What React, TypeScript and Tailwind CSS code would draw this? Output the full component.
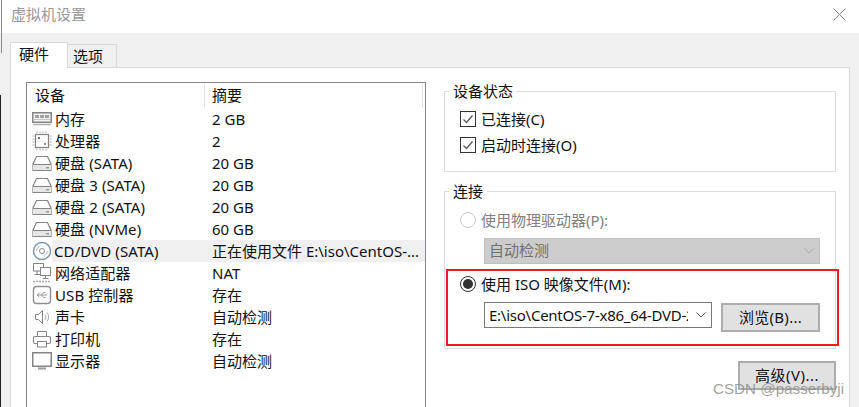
import React from "react";

const g = "#858585";

function Ram() {
  return (
    <svg width="20" height="20" viewBox="0 0 20 20" fill="none">
      <rect x="0.75" y="3.75" width="18.5" height="9.5" fill="#f2f2f2" stroke={g} strokeWidth="1.5" />
      <rect x="3" y="6" width="4" height="3" fill="#a0a0a0" />
      <rect x="8" y="6" width="4" height="3" fill="#a0a0a0" />
      <rect x="13" y="6" width="4" height="3" fill="#a0a0a0" />
      <path d="M1 10.5h18" stroke="#c4c4c4" />
      <path d="M1 15.5h18" stroke="#b0b0b0" strokeWidth="1.5" />
    </svg>
  );
}
function Cpu() {
  return (
    <svg width="20" height="20" viewBox="0 0 20 20" fill="none">
      <rect x="3.5" y="3.5" width="13" height="13" stroke={g} strokeWidth="1.2" />
      <rect x="6" y="6" width="2" height="2" fill="#707070" />
      <rect x="12" y="12" width="2" height="2" fill="#8c8c8c" />
      <path d="M5 0.5v2M8 0.5v2M11 0.5v2M14 0.5v2M5 17.5v2M8 17.5v2M11 17.5v2M14 17.5v2M0.5 5h2M0.5 8h2M0.5 11h2M0.5 14h2M17.5 5h2M17.5 8h2M17.5 11h2M17.5 14h2" stroke="#a8a8a8" />
    </svg>
  );
}
function Disk() {
  return (
    <svg width="20" height="20" viewBox="0 0 20 20" fill="none">
      <path d="M4.5 3.5h11L19 11v6.5H1V11z" stroke={g} strokeWidth="1.2" fill="#fff" />
      <rect x="1" y="12" width="18" height="5.5" fill="#e6e6e6" />
      <rect x="14" y="14" width="3" height="1.5" fill="#999" />
      <path d="M1 11.5h18M1 17.5h18" stroke={g} strokeWidth="1.2" />
    </svg>
  );
}
function Cd() {
  return (
    <svg width="20" height="20" viewBox="0 0 20 20" fill="none">
      <circle cx="10" cy="10" r="8.5" stroke="#7d97ad" strokeWidth="1.5" />
      <circle cx="10" cy="10" r="2.5" stroke="#8c8c8c" />
      <path d="M4.5 10a5.5 5.5 0 0 1 3-4.8M15.5 10a5.5 5.5 0 0 1-3 4.8" stroke="#a9bac8" />
    </svg>
  );
}
function Net() {
  return (
    <svg width="20" height="20" viewBox="0 0 20 20" fill="none">
      <rect x="1.5" y="0.5" width="10" height="7.5" stroke={g} />
      <rect x="8.5" y="4.5" width="10" height="8" fill="#fff" stroke={g} />
      <path d="M13.5 12.5v3M10.5 15.5h6M5 8v3M2.5 11.5h6" stroke={g} />
      <path d="M1 18.5h18" stroke="#aaa" strokeWidth="1.5" strokeDasharray="2 1" />
    </svg>
  );
}
function Usb() {
  return (
    <svg width="20" height="20" viewBox="0 0 20 20" fill="none">
      <rect x="1.5" y="1.5" width="17" height="17" rx="3" stroke="#8f8f8f" strokeWidth="1.4" />
      <path d="M5 10h10M7.5 8 5 10l2.5 2M9.5 10l2-2.5h2M9.5 10l2 2.5h2" stroke="#999" />
    </svg>
  );
}
function Speaker() {
  return (
    <svg width="20" height="20" viewBox="0 0 20 20" fill="none">
      <path d="M3.5 7.5h3l4-4v13l-4-4h-3z" stroke={g} />
      <path d="M13 7.5a4 4 0 0 1 0 5M15 5.5a7 7 0 0 1 0 9" stroke="#aaa" />
    </svg>
  );
}
function Printer() {
  return (
    <svg width="20" height="20" viewBox="0 0 20 20" fill="none">
      <path d="M5.5 7.5v-5h9v5" stroke={g} />
      <rect x="1.5" y="7.5" width="17" height="7" rx="1.5" stroke={g} strokeWidth="1.2" />
      <rect x="5.5" y="12.5" width="9" height="5.5" fill="#fff" stroke={g} />
    </svg>
  );
}
function Display() {
  return (
    <svg width="20" height="20" viewBox="0 0 20 20" fill="none">
      <rect x="0.75" y="1.75" width="18.5" height="13.5" stroke={g} strokeWidth="1.5" />
      <path d="M6 17.5h8" stroke="#999" strokeWidth="2" />
    </svg>
  );
}

const rows: { icon: React.ReactNode; name: string; sum: string; active?: boolean }[] = [
  { icon: <Ram />, name: "内存", sum: "2 GB" },
  { icon: <Cpu />, name: "处理器", sum: "2" },
  { icon: <Disk />, name: "硬盘 (SATA)", sum: "20 GB" },
  { icon: <Disk />, name: "硬盘 3 (SATA)", sum: "20 GB" },
  { icon: <Disk />, name: "硬盘 2 (SATA)", sum: "20 GB" },
  { icon: <Disk />, name: "硬盘 (NVMe)", sum: "60 GB" },
  { icon: <Cd />, name: "CD/DVD (SATA)", sum: "正在使用文件 E:\\iso\\CentOS-...", active: true },
  { icon: <Net />, name: "网络适配器", sum: "NAT" },
  { icon: <Usb />, name: "USB 控制器", sum: "存在" },
  { icon: <Speaker />, name: "声卡", sum: "自动检测" },
  { icon: <Printer />, name: "打印机", sum: "存在" },
  { icon: <Display />, name: "显示器", sum: "自动检测" },
];

function Check({ label }: { label: string }) {
  return (
    <div className="flex items-center h-[26px]">
      <span className="w-[16px] h-[16px] border border-[#333] flex items-center justify-center mr-[5px]">
        <svg width="12" height="12" viewBox="0 0 12 12" fill="none">
          <path d="M1.5 6.5 4.5 9.5 10.5 2.5" stroke="#555" strokeWidth="1.2" />
        </svg>
      </span>
      <span className="pb-[1px]">{label}</span>
    </div>
  );
}

function Chevron({ color }: { color: string }) {
  return (
    <svg width="10" height="6" viewBox="0 0 10 6" fill="none">
      <path d="M0.5 0.5 5 5 9.5 0.5" stroke={color} />
    </svg>
  );
}

export default function App() {
  return (
    <div
      className="relative w-[859px] h-[407px] overflow-hidden bg-[#f0f0f0] flex flex-col text-[15px] leading-[20px] text-[#111]"
      style={{ fontFamily: '"Noto Sans", "Noto Sans CJK SC", sans-serif' }}
    >
      <div className="h-[33px] bg-white flex items-center justify-between pl-[11px] pr-[13px] text-[#999] shrink-0">
        <span className="pb-[6px]">虚拟机设置</span>
        <svg width="13" height="13" viewBox="0 0 13 13" fill="none" className="mb-[4px]">
          <path d="M0.5 0.5 12.5 12.5M12.5 0.5 0.5 12.5" stroke="#8a8a8a" />
        </svg>
      </div>
      <div className="flex items-end h-[34px] pl-[10px] shrink-0">
        <div className="relative z-10 -mb-[1px] w-[58px] h-[26px] bg-white border border-b-0 border-[#d9d9d9] pl-[8px] pt-[1px]">硬件</div>
        <div className="w-[50px] h-[23px] -ml-px border border-b-0 border-[#d9d9d9] pl-[5px] pt-[1px]">选项</div>
      </div>
      <div className="flex-1 ml-[10px] mr-[9px] bg-white border border-b-0 border-[#d9d9d9] flex pl-[15px] pt-[14px] min-h-0">
        <div className="w-[400px] border border-b-0 border-[#828790] shrink-0">
          <div className="flex h-[25px]">
            <div className="w-[178px] pl-[8px] border-r border-[#e5e5e5] leading-[24px]">设备</div>
            <div className="w-[218px] pl-[7px] border-r border-[#e5e5e5] leading-[24px]">摘要</div>
          </div>
          {rows.map((r) => (
            <div key={r.name} className="flex items-center h-[22px]">
              <div className="w-[25px] pl-[5px] shrink-0 flex items-center">{r.icon}</div>
              <div className={`flex flex-1 h-[22px] items-center ${r.active ? "bg-[#f0f0f0]" : ""}`}>
                <div className={`w-[160px] shrink-0 whitespace-nowrap pb-[1px] tracking-[0.1px] ${r.active ? "pl-[2px]" : "pl-[3px]"}`}>{r.name}</div>
                <div className="whitespace-nowrap pb-[1px]">{r.sum}</div>
              </div>
            </div>
          ))}
        </div>
        <div className="w-[392px] ml-[18px] -mt-[1px] flex flex-col">
          <fieldset className="border border-[#dcdcdc] h-[91px] pl-[15px] pt-[5px]">
            <legend className="-ml-[11px] px-[4px]">设备状态</legend>
            <Check label="已连接(C)" />
            <Check label="启动时连接(O)" />
          </fieldset>
          <fieldset className="border border-[#dcdcdc] h-[168px] mt-[9px] pl-[15px]">
            <legend className="-ml-[11px] px-[4px]">连接</legend>
            <div className="flex items-center h-[20px] mt-[9px] text-[#808080]">
              <span className="w-[16px] h-[16px] rounded-full border border-[#c8c8c8] mr-[5px]" />
              <span>使用物理驱动器(P):</span>
            </div>
            <div className="ml-[24px] mt-[8px] w-[336px] h-[26px] bg-[#cccccc] border border-[#bfbfbf] flex items-center justify-between pl-[4px] pr-[5px] text-[#707070]">
              <span className="pb-[2px]">自动检测</span>
              <Chevron color="#a8a8a8" />
            </div>
            <div className="flex items-center h-[20px] mt-[10px]">
              <span className="w-[16px] h-[16px] rounded-full border border-[#333] mr-[5px] flex items-center justify-center">
                <span className="w-[10px] h-[10px] rounded-full bg-[#333]" />
              </span>
              <span>使用 ISO 映像文件(M):</span>
            </div>
            <div className="ml-[24px] mt-[8px] flex items-start">
              <div className="w-[228px] h-[26px] border border-[#7a7a7a] bg-white flex items-center justify-between pl-[4px] pr-[5px]">
                <span className="w-[199px] overflow-hidden whitespace-nowrap tracking-[-0.25px]">E:\iso\CentOS-7-x86_64-DVD-2009.iso</span>
                <Chevron color="#555" />
              </div>
              <div className="ml-[9px] mt-[1px] w-[99px] h-[29px] bg-[#e1e1e1] border-2 border-[#adadad] flex items-center justify-center pb-[2px] tracking-[0.3px]">浏览(B)...</div>
            </div>
          </fieldset>
          <div className="flex justify-end mt-[12px]">
            <div className="w-[98px] h-[29px] bg-[#e1e1e1] border-2 border-[#adadad] flex items-center justify-center pb-[2px] tracking-[0.5px]">高级(V)...</div>
          </div>
        </div>
      </div>
      <div className="absolute left-[1px] top-0 h-[53px] w-[1px] bg-[#8a8a8a]" />
      <div className="absolute left-0 top-[95px] bottom-0 w-[1px] bg-[#222]" />
      <div className="absolute left-[446px] top-[269px] w-[393px] h-[77px] border-2 border-[#ed1c24]" />
      <div
        className="absolute left-[713px] top-[379px] text-[15.2px] leading-[20px] text-[#8a8a8a]/80 whitespace-nowrap"
        style={{ fontFamily: '"Liberation Sans", sans-serif' }}
      >
        CSDN @passerbyji
      </div>
    </div>
  );
}
